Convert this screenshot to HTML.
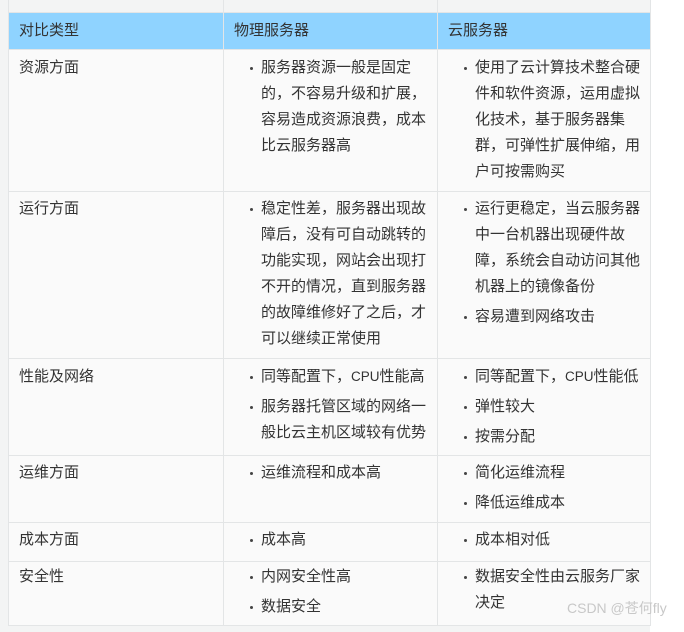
<!DOCTYPE html>
<html><head><meta charset="utf-8"><style>
body{margin:0;width:684px;height:632px;background:#fff;position:relative;overflow:hidden;font-family:"Liberation Sans","Noto Sans CJK SC",sans-serif;font-size:15px;color:#333}
.bg{position:absolute;left:0;top:0;width:650px;height:632px;background:#f3f4f4}
.c{position:absolute;background:#fafafa;box-sizing:border-box}
.h{background:#8fd3ff}
.v{position:absolute;width:1px;background:#e3e5e6}
.hl{position:absolute;height:1px;background:#e3e5e6;left:8px;width:643px}
.t{position:absolute;line-height:26px;white-space:nowrap}
ul{margin:0;padding:0;list-style:none}
li{position:relative;margin-bottom:4px}
li:before{content:"";position:absolute;left:-11px;top:12px;width:3px;height:3px;border-radius:50%;background:#444}
.l{font-size:13.5px}
.w{position:absolute;left:567px;top:598px;color:#c8c8c8;font-size:14px;white-space:nowrap}
</style></head><body>
<div class="bg"></div>
<div class="c" style="left:9px;top:0;width:642px;height:12px;background:#f3f4f4"></div>
<div class="c h" style="left:9px;top:13px;width:642px;height:36px"></div>
<div class="c" style="left:9px;top:50px;width:642px;height:576px"></div>
<div class="hl" style="top:12px"></div>
<div class="hl" style="top:49px"></div>
<div class="hl" style="top:191px"></div>
<div class="hl" style="top:358px"></div>
<div class="hl" style="top:455px"></div>
<div class="hl" style="top:522px"></div>
<div class="hl" style="top:561px"></div>
<div class="hl" style="top:625px"></div>
<div class="v" style="left:8px;top:0;height:626px"></div>
<div class="v" style="left:223px;top:0;height:626px"></div>
<div class="v" style="left:437px;top:0;height:626px"></div>
<div class="v" style="left:650px;top:0;height:626px"></div>

<div class="t" style="left:19px;top:18px">对比类型</div>
<div class="t" style="left:234px;top:18px">物理服务器</div>
<div class="t" style="left:448px;top:18px">云服务器</div>

<div class="t" style="left:19px;top:55px">资源方面</div>
<div class="t" style="left:261px;top:55px"><ul><li>服务器资源一般是固定<br>的，不容易升级和扩展，<br>容易造成资源浪费，成本<br>比云服务器高</li></ul></div>
<div class="t" style="left:475px;top:55px"><ul><li>使用了云计算技术整合硬<br>件和软件资源，运用虚拟<br>化技术，基于服务器集<br>群，可弹性扩展伸缩，用<br>户可按需购买</li></ul></div>

<div class="t" style="left:19px;top:196px">运行方面</div>
<div class="t" style="left:261px;top:196px"><ul><li>稳定性差，服务器出现故<br>障后，没有可自动跳转的<br>功能实现，网站会出现打<br>不开的情况，直到服务器<br>的故障维修好了之后，才<br>可以继续正常使用</li></ul></div>
<div class="t" style="left:475px;top:196px"><ul><li>运行更稳定，当云服务器<br>中一台机器出现硬件故<br>障，系统会自动访问其他<br>机器上的镜像备份</li><li>容易遭到网络攻击</li></ul></div>

<div class="t" style="left:19px;top:364px">性能及网络</div>
<div class="t" style="left:261px;top:364px"><ul><li>同等配置下，<span class="l">CPU</span>性能高</li><li>服务器托管区域的网络一<br>般比云主机区域较有优势</li></ul></div>
<div class="t" style="left:475px;top:364px"><ul><li>同等配置下，<span class="l">CPU</span>性能低</li><li>弹性较大</li><li>按需分配</li></ul></div>

<div class="t" style="left:19px;top:460px">运维方面</div>
<div class="t" style="left:261px;top:460px"><ul><li>运维流程和成本高</li></ul></div>
<div class="t" style="left:475px;top:460px"><ul><li>简化运维流程</li><li>降低运维成本</li></ul></div>

<div class="t" style="left:19px;top:527px">成本方面</div>
<div class="t" style="left:261px;top:527px"><ul><li>成本高</li></ul></div>
<div class="t" style="left:475px;top:527px"><ul><li>成本相对低</li></ul></div>

<div class="t" style="left:19px;top:564px">安全性</div>
<div class="t" style="left:261px;top:564px"><ul><li>内网安全性高</li><li>数据安全</li></ul></div>
<div class="t" style="left:475px;top:564px"><ul><li>数据安全性由云服务厂家<br>决定</li></ul></div>
<div class="w">CSDN @苍何fly</div>
</body></html>
